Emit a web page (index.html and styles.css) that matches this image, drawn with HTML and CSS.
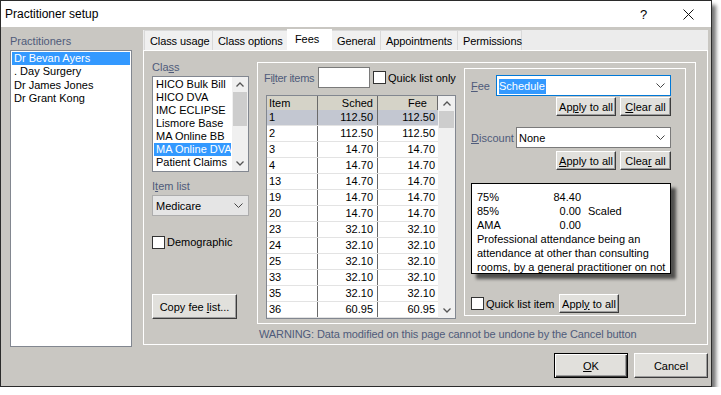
FILE: index.html
```html
<!DOCTYPE html>
<html lang="en">
<head>
  <meta charset="UTF-8">
  <title>Practitioner setup</title>
  <link rel="stylesheet" href="styles.css">
</head>
<body>
  <div class="window">
    <div class="titlebar">
      <span class="title">Practitioner setup</span>
      <span class="tb-btn">?</span>
      <span class="tb-btn">
        <svg width="11" height="11" viewBox="0 0 11 11"><path d="M0.5 0.5L10.5 10.5M10.5 0.5L0.5 10.5" stroke="#111" stroke-width="1"/></svg>
      </span>
    </div>

    <div class="content">
      <div class="main">
        <!-- practitioners -->
        <div class="practitioners">
          <div class="label">Practitioners</div>
          <ul class="listbox prac-list">
            <li class="sel">Dr Bevan Ayers</li>
            <li>. Day Surgery</li>
            <li>Dr James Jones</li>
            <li>Dr Grant Kong</li>
          </ul>
        </div>

        <!-- tabs -->
        <div class="tabs">
          <div class="tab-strip">
            <span class="tab t1">Class usage</span>
            <span class="tab t2">Class options</span>
            <span class="tab active">Fees</span>
            <span class="tab t4">General</span>
            <span class="tab t5">Appointments</span>
            <span class="tab t6">Permissions</span>
          </div>

          <div class="tab-page">
            <div class="class-col">
              <div class="label">Cla<u>s</u>s</div>
              <div class="listbox class-list">
                <ul>
                  <li>HICO Bulk Bill</li>
                  <li>HICO DVA</li>
                  <li>IMC ECLIPSE</li>
                  <li>Lismore Base</li>
                  <li>MA Online BB</li>
                  <li class="sel">MA Online DVA</li>
                  <li>Patient Claims</li>
                </ul>
                <div class="vscroll small">
                  <span class="arrow"><svg width="8" height="5" viewBox="0 0 8 5"><path d="M0.5 4.5L4 1L7.5 4.5" fill="none" stroke="#555" stroke-width="1.3"/></svg></span>
                  <span class="thumb"></span>
                  <span class="track"></span>
                  <span class="arrow"><svg width="8" height="5" viewBox="0 0 8 5"><path d="M0.5 0.5L4 4L7.5 0.5" fill="none" stroke="#555" stroke-width="1.3"/></svg></span>
                </div>
              </div>
              <div class="label item-label">I<u>t</u>em list</div>
              <div class="combo grey">
                <span class="combo-text">Medicare</span>
                <svg width="9" height="5" viewBox="0 0 9 5"><path d="M0.5 0.5L4.5 4.5L8.5 0.5" fill="none" stroke="#444" stroke-width="1"/></svg>
              </div>
              <div class="check demo"><span class="box"></span>Demographic</div>
              <button class="btn copy">Copy fee <u>l</u>ist...</button>
            </div>

            <div class="fee-area">
              <div class="frame">
                <div class="items-col">
                  <div class="filter-row">
                    <span class="label filter-label">Fi<u>l</u>ter items</span>
                    <span class="textbox"></span>
                    <span class="check"><span class="box"></span>Quick list only</span>
                  </div>

                  <div class="table">
                    <div class="grid">
                      <div class="row head">
                        <span class="c-item">Item</span><span class="c-num">Sched</span><span class="c-num c-fee">Fee</span>
                      </div>
                      <div class="row sel"><span class="c-item">1</span><span class="c-num">112.50</span><span class="c-num c-fee">112.50</span></div>
                      <div class="row"><span class="c-item">2</span><span class="c-num">112.50</span><span class="c-num c-fee">112.50</span></div>
                      <div class="row"><span class="c-item">3</span><span class="c-num">14.70</span><span class="c-num c-fee">14.70</span></div>
                      <div class="row"><span class="c-item">4</span><span class="c-num">14.70</span><span class="c-num c-fee">14.70</span></div>
                      <div class="row"><span class="c-item">13</span><span class="c-num">14.70</span><span class="c-num c-fee">14.70</span></div>
                      <div class="row"><span class="c-item">19</span><span class="c-num">14.70</span><span class="c-num c-fee">14.70</span></div>
                      <div class="row"><span class="c-item">20</span><span class="c-num">14.70</span><span class="c-num c-fee">14.70</span></div>
                      <div class="row"><span class="c-item">23</span><span class="c-num">32.10</span><span class="c-num c-fee">32.10</span></div>
                      <div class="row"><span class="c-item">24</span><span class="c-num">32.10</span><span class="c-num c-fee">32.10</span></div>
                      <div class="row"><span class="c-item">25</span><span class="c-num">32.10</span><span class="c-num c-fee">32.10</span></div>
                      <div class="row"><span class="c-item">33</span><span class="c-num">32.10</span><span class="c-num c-fee">32.10</span></div>
                      <div class="row"><span class="c-item">35</span><span class="c-num">32.10</span><span class="c-num c-fee">32.10</span></div>
                      <div class="row"><span class="c-item">36</span><span class="c-num">60.95</span><span class="c-num c-fee">60.95</span></div>
                    </div>
                    <div class="vscroll">
                      <span class="arrow"><svg width="8" height="5" viewBox="0 0 8 5"><path d="M0.5 4.5L4 1L7.5 4.5" fill="none" stroke="#555" stroke-width="1.3"/></svg></span>
                      <span class="thumb"></span>
                      <span class="track"></span>
                      <span class="arrow"><svg width="8" height="5" viewBox="0 0 8 5"><path d="M0.5 0.5L4 4L7.5 0.5" fill="none" stroke="#555" stroke-width="1.3"/></svg></span>
                    </div>
                  </div>
                </div>

                <div class="group">
                  <div class="field-row first">
                    <span class="label fee-label"><u>F</u>ee</span>
                    <div class="combo focus">
                      <span class="combo-text"><span class="hl">Schedule</span></span>
                      <svg width="9" height="5" viewBox="0 0 9 5"><path d="M0.5 0.5L4.5 4.5L8.5 0.5" fill="none" stroke="#444" stroke-width="1"/></svg>
                    </div>
                  </div>
                  <div class="btn-row">
                    <button class="btn apply">Ap<u>p</u>ly to all</button>
                    <button class="btn clear"><u>C</u>lear all</button>
                  </div>

                  <div class="field-row second">
                    <span class="label disc-label"><u>D</u>iscount</span>
                    <div class="combo">
                      <span class="combo-text">None</span>
                      <svg width="9" height="5" viewBox="0 0 9 5"><path d="M0.5 0.5L4.5 4.5L8.5 0.5" fill="none" stroke="#444" stroke-width="1"/></svg>
                    </div>
                  </div>
                  <div class="btn-row">
                    <button class="btn apply"><u>A</u>pply to all</button>
                    <button class="btn clear">Clea<u>r</u> all</button>
                  </div>

                  <div class="info">
                    <div class="info-grid">
                      <span>75%</span><span class="num">84.40</span><span></span>
                      <span>85%</span><span class="num">0.00</span><span>Scaled</span>
                      <span>AMA</span><span class="num">0.00</span><span></span>
                    </div>
                    <p>Professional attendance being an attendance at other than consulting rooms, by a general practitioner on not more than 1 patient on the 1 occasion</p>
                  </div>

                  <div class="quick-row">
                    <span class="check"><span class="box"></span><span class="quick-text">Quick list item</span></span>
                    <button class="btn apply">Appl<u>y</u> to all</button>
                  </div>
                </div>
              </div>
              <div class="warning">WARNING: Data modified on this page cannot be undone by the Cancel button</div>
            </div>
          </div>
        </div>
      </div>

      <div class="footer">
        <button class="btn default"><u>O</u>K</button>
        <button class="btn cancel">Cancel</button>
      </div>
    </div>
  </div>
</body>
</html>
```

FILE: styles.css
```css
/* base */
* {
  box-sizing: border-box;
}
body {
  margin: 0;
  background: #fff;
  font-family: "Liberation Sans", Arial, sans-serif;
  font-size: 11px;
  color: #000;
  white-space: nowrap;
}
u {
  text-decoration-thickness: 1px;
  text-underline-offset: 1px;
}
.window {
  width: 712px;
  height: 387px;
  border: 1px solid #2b2b2b;
  background: #c9c7c2;
  box-shadow: 4px 5px 4px rgba(0, 0, 0, 0.55);
  display: flex;
  flex-direction: column;
}

/* title bar */
.titlebar {
  height: 26px;
  background: #fff;
  display: flex;
  align-items: center;
  padding-left: 4px;
  font-size: 12px;
}
.titlebar .title {
  flex: 1;
}
.tb-btn {
  width: 45px;
  display: flex;
  justify-content: center;
  align-items: center;
  font-size: 13px;
}

/* layout */
.content {
  flex: 1;
  display: flex;
  flex-direction: column;
}
.main {
  height: 320px;
  display: flex;
  gap: 11px;
  padding: 3px 3px 0 9px;
}
.label {
  color: #4f5b7a;
  line-height: 14px;
}
.practitioners {
  width: 122px;
  padding-top: 4px;
}
.practitioners .label {
  margin-bottom: 2px;
}

/* list boxes */
.listbox {
  background: #fff;
  border: 1px solid #828790;
  margin: 0;
  padding: 0;
  list-style: none;
}
.prac-list {
  height: 297px;
  padding: 1px 1px 0;
}
.prac-list li {
  height: 13.3px;
  line-height: 13px;
  padding-left: 2px;
}
li.sel {
  background: #3399ff;
  color: #fff;
}

/* tabs */
.tabs {
  width: 565px;
}
.tab-strip {
  height: 21px;
  display: flex;
  align-items: flex-end;
  background: #ececec;
  border-bottom: 1px solid #fff;
  padding-left: 1px;
}
.tab {
  height: 20px;
  padding: 0 5px;
  line-height: 20px;
  background: #f0f0f0;
  border: 1px solid #d9d9d9;
  border-bottom: none;
  margin-right: -1px;
  flex: none;
  letter-spacing: -0.1px;
}
.t1 { width: 69px; }
.t2 { width: 76px; }
.t4 { width: 50px; }
.t5 { width: 78px; }
.t6 { width: 65px; }
.tab.active {
  width: 45px;
  height: 22px;
  line-height: 18px;
  padding-left: 7px;
  background: #fff;
  border-color: #fff;
  position: relative;
  margin-bottom: -1px;
}
.tab-page {
  height: 294px;
  display: flex;
  border: 1px solid #fff;
  border-top: none;
  padding-left: 8px;
}

/* class column */
.class-col {
  width: 97px;
  display: flex;
  flex-direction: column;
  align-items: flex-start;
}
.class-col > .label:first-child {
  margin-top: 9px;
}
.class-list {
  margin-top: 2px;
  width: 97px;
  height: 96px;
  display: flex;
}
.class-list ul {
  flex: 1;
  margin: 0;
  padding: 1px 1px 0;
  list-style: none;
  overflow: hidden;
}
.class-list li {
  height: 13px;
  line-height: 13px;
  padding-left: 2px;
}
.item-label {
  margin-top: 7px;
}

/* scroll bars */
.vscroll {
  width: 17px;
  background: #f0f0f0;
  display: flex;
  flex-direction: column;
  flex: none;
}
.vscroll .arrow {
  height: 15px;
  display: flex;
  justify-content: center;
  align-items: center;
}
.vscroll .thumb {
  height: 17px;
  background: #cdcdcd;
  margin: 0 1px;
}
.vscroll .track {
  flex: 1;
}
.vscroll.small {
  width: 16px;
}
.vscroll.small .thumb {
  height: 34px;
}

/* combos, checks, text boxes */
.combo {
  height: 21px;
  background: #fff;
  border: 1px solid #7a7a7a;
  display: flex;
  align-items: center;
  padding: 0 5px 0 2px;
  flex: 1;
}
.combo .combo-text {
  flex: 1;
}
.combo.grey {
  flex: none;
  width: 97px;
  margin-top: 2px;
  background: #e5e5e5;
  border-color: #adadad;
  padding-left: 3px;
}
.combo.focus {
  border-color: #0078d7;
}
.hl {
  background: #3399ff;
  color: #fff;
  padding: 1px 1px 2px 0;
}
.check {
  display: flex;
  align-items: center;
  height: 14px;
}
.check .box {
  width: 13px;
  height: 13px;
  background: #fff;
  border: 1px solid #333;
  margin-right: 2px;
  flex: none;
}
.check.demo {
  margin-top: 19px;
}
.textbox {
  width: 52px;
  height: 21px;
  background: #fff;
  border: 1px solid #7a7a7a;
  margin-right: 3px;
  flex: none;
}

/* buttons */
.btn {
  font: inherit;
  color: #000;
  padding: 0;
  background: #e1e0dc;
  border: 1px solid;
  border-color: #fff #3c3c3c #3c3c3c #fff;
  box-shadow: inset -1px -1px #9d9d9d;
  flex: none;
}
.btn.copy {
  margin-top: 45px;
  width: 85px;
  height: 25px;
}
.btn.default {
  border: 1px solid #000;
  box-shadow: inset 1px 1px #fff, inset -1px -1px #3c3c3c, inset -2px -2px #9d9d9d;
}
.btn.default,
.btn.cancel {
  width: 74px;
  height: 25px;
}

/* fees area */
.fee-area {
  margin-left: 8px;
  display: flex;
  flex-direction: column;
}
.frame {
  margin-top: 11px;
  width: 439px;
  height: 262px;
  border: 1px solid #fff;
  display: flex;
  padding: 4px 0 0 6px;
}
.items-col {
  width: 192px;
  flex: none;
}
.filter-row {
  height: 21px;
  display: flex;
  align-items: center;
}
.filter-label {
  width: 54px;
  flex: none;
  letter-spacing: -0.3px;
}

/* fee table */
.table {
  margin: 7px 0 0 2px;
  width: 190px;
  height: 224px;
  border: 1px solid #828790;
  display: flex;
  background: #fff;
}
.grid {
  width: 171px;
}
.row {
  display: flex;
  height: 16px;
  line-height: 15px;
  border-bottom: 1px solid #e3e3e3;
}
.row.head {
  height: 14px;
  line-height: 14px;
  background: #d5d3c8;
  border-bottom: none;
}
.row.sel {
  background: #c3c7d1;
}
.row span {
  border-right: 1px solid #6a6a6a;
}
.c-item {
  width: 51px;
  padding-left: 2px;
}
.c-num {
  width: 60px;
  text-align: right;
  padding-right: 4px;
}
.row span.c-fee {
  border-right: none;
  padding-right: 3px;
}
.row.head .c-fee {
  padding-right: 10px;
  border-right: 1px solid #6a6a6a;
}

/* fee group */
.group {
  margin: 1px 0 0 8px;
  width: 222px;
  height: 248px;
  border: 1px solid #fff;
  padding: 0 14px 0 6px;
  flex: none;
}
.field-row {
  display: flex;
  align-items: center;
}
.field-row.first {
  margin-top: 6px;
}
.field-row.second {
  margin-top: 11px;
}
.fee-label {
  width: 25px;
}
.disc-label {
  width: 45px;
}
.btn-row {
  display: flex;
  justify-content: flex-end;
  gap: 4px;
  margin-top: 1px;
}
.field-row.second + .btn-row {
  margin-top: 3px;
}
.btn-row .btn {
  height: 19px;
}
.btn.apply {
  width: 60px;
  height: 19px;
}
.btn.clear {
  width: 51px;
}
.info {
  margin-top: 13px;
  width: 200px;
  height: 91px;
  background: #fff;
  border: 1px solid #000;
  box-shadow: 5px 5px 3px rgba(0, 0, 0, 0.6);
  padding: 6px 4px 0 5px;
  line-height: 14px;
  overflow: hidden;
  white-space: normal;
}
.info-grid {
  display: grid;
  grid-template-columns: 53px 44px auto;
  column-gap: 7px;
}
.info-grid .num {
  text-align: right;
}
.info p {
  margin: 0;
}
.quick-row {
  margin-top: 20px;
  display: flex;
  align-items: center;
  height: 19px;
}
.quick-text {
  width: 73px;
}
.warning {
  margin-top: 3px;
  padding-left: 2px;
  line-height: 14px;
  color: #4f5b7a;
  letter-spacing: -0.1px;
}

/* footer buttons */
.footer {
  display: flex;
  justify-content: flex-end;
  gap: 6px;
  padding: 6px 3px 0 0;
}
```
